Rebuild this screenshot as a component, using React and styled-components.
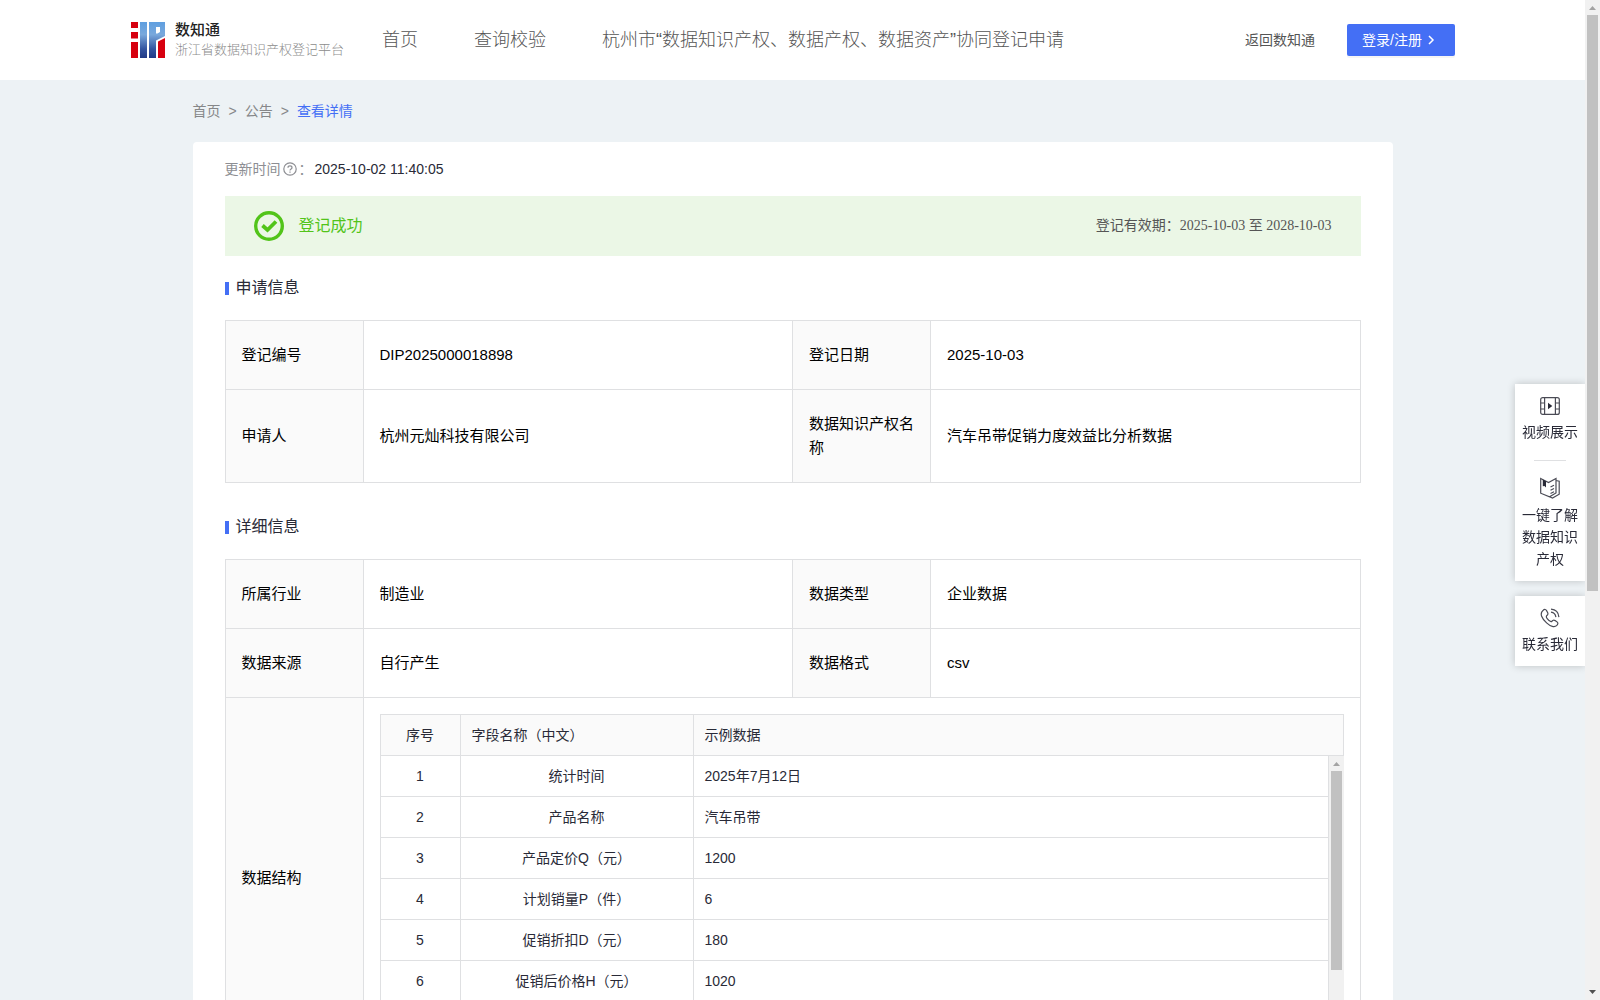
import React from 'react';
import styled, { createGlobalStyle } from 'styled-components';

const GlobalStyle = createGlobalStyle`
	* {
		box-sizing: border-box;
	}

	body {
		margin: 0;
		color: #292a37;
		background: #edf2f5;
		font-family: "Liberation Sans", "Noto Sans CJK SC", sans-serif;
		font-size: 14px;
		line-height: 22px;
	}

	a {
		color: inherit;
		text-decoration: none;
	}
`;

const SShell = styled.div`
	display: flex;
	height: 100vh;
	overflow: hidden;
`;

const SPage = styled.div`
	flex: 1;
	min-width: 0;
	overflow-y: auto;
	scrollbar-width: none;
`;

/* scrollbars */

const STrack = styled.div`
	display: flex;
	flex: none;
	flex-direction: column;
	align-items: center;
	width: 15px;
	background: #f1f1f1;
`;

const SThumb = styled.div`
	width: 11px;
	height: ${({ $size }) => $size};
	margin-bottom: auto;
	background: #c1c1c1;
`;

const SArrow = styled.svg`
	flex: none;
	width: 15px;
	height: 15px;
	fill: ${({ $dark }) => ($dark ? '#505050' : '#a3a3a3')};
`;

const Scrollbar = ({ size }) => (
	<STrack aria-hidden="true">
		<SArrow viewBox="0 0 15 15">
			<path d="M4 10 7.5 6 11 10z" />
		</SArrow>
		<SThumb $size={size} />
		<SArrow viewBox="0 0 15 15" $dark>
			<path d="M4 5 7.5 9 11 5z" />
		</SArrow>
	</STrack>
);

/* header */

const SHeader = styled.header`
	display: flex;
	align-items: center;
	height: 80px;
	padding: 0 130px;
	background: #fff;
	color: #555;
`;

const SBrand = styled.a`
	display: flex;
	align-items: center;
	width: 252px;
	padding-left: 1px;
	gap: 10px;
	white-space: nowrap;

	svg {
		flex: none;
	}
`;

const SBrandName = styled.div`
	color: #222;
	font-size: 15px;
	font-weight: 500;
	line-height: 20px;
`;

const SBrandSub = styled.div`
	color: #8c8c8c;
	font-size: 13px;
	font-weight: 300;
	line-height: 20px;
`;

const SNav = styled.nav`
	display: flex;
	flex: 1;
	gap: 56px;
	font-size: 18px;
	font-weight: 300;
	white-space: nowrap;
`;

const SActions = styled.div`
	display: flex;
	align-items: center;
	gap: 32px;
	white-space: nowrap;
`;

const SLogin = styled.button`
	display: flex;
	align-items: center;
	gap: 2px;
	width: 108px;
	height: 32px;
	padding: 0 15px;
	border: 0;
	border-radius: 2px;
	background: #446ff5;
	box-shadow: 0 2px 0 rgba(0, 0, 0, 0.04);
	color: #fff;
	font: inherit;
	white-space: nowrap;
	cursor: pointer;
`;

/* content */

const SMain = styled.main`
	max-width: 1200px;
	margin: 0 auto;
`;

const SCrumbs = styled.nav`
	display: flex;
	gap: 8px;
	padding: 20px 0;
	color: #868789;

	a:last-child {
		color: #446ff5;
	}
`;

const SCard = styled.section`
	padding: 16px 32px 32px;
	border-radius: 4px;
	background: #fff;
`;

const SUpdated = styled.div`
	display: flex;
	align-items: center;
	gap: 2px;
	color: #8d8e93;

	time {
		color: #292a37;
	}
`;

const SBanner = styled.div`
	display: flex;
	align-items: center;
	gap: 15px;
	height: 60px;
	margin-top: 16px;
	padding: 0 29px;
	background: #ebf7e6;
	color: #52c41a;
	font-size: 16px;
`;

const SValidity = styled.span`
	margin-left: auto;
	color: #555;
	font-family: "Liberation Serif", "Noto Sans CJK SC", serif;
	font-size: 14px;
`;

const STitle = styled.h2`
	display: flex;
	align-items: center;
	gap: 7px;
	height: 64px;
	margin: 0;
	font-size: 16px;
	font-weight: 400;

	&::before {
		width: 4px;
		height: 13px;
		background: #446ff5;
		content: '';
	}
`;

const SInfoTable = styled.table`
	width: 100%;
	margin-bottom: 12px;
	border-collapse: collapse;
	table-layout: fixed;
	color: #000;
	font-size: 15px;
	line-height: 24px;

	> colgroup > col:nth-child(odd) {
		width: 138px;
	}
`;

const SLabel = styled.th`
	padding: 22px 16px;
	border: 1px solid #dfe0e2;
	background: #fafafa;
	font-weight: 400;
	text-align: left;
`;

const SValue = styled.td`
	padding: ${({ $nested }) => ($nested ? '16px' : '22px 16px')};
	border: 1px solid #dfe0e2;
`;

const SFieldTable = styled.table`
	width: 100%;
	border-collapse: separate;
	border-spacing: 0;
	border-left: 1px solid #dfe0e2;
	table-layout: fixed;
	color: #292a37;
	font-size: 14px;
	line-height: 22px;

	th,
	td {
		height: 41px;
		padding: 9px 11px;
		border-right: 1px solid #dfe0e2;
		border-bottom: 1px solid #dfe0e2;
		text-align: left;
	}

	th {
		height: 42px;
		border-top: 1px solid #dfe0e2;
		background: #fafafa;
		font-weight: 400;
	}

	th:first-child,
	td:first-child,
	td:nth-child(2) {
		text-align: center;
	}

	col:nth-child(1) {
		width: 80px;
	}

	col:nth-child(2) {
		width: 233px;
	}
`;

const SFieldBody = styled.div`
	display: flex;
	height: 286px;
	overflow: hidden;
`;

const SFieldScroll = styled.div`
	flex: 1;
	overflow-y: auto;
	scrollbar-width: none;
`;

/* floating shortcuts */

const SSide = styled.aside`
	position: fixed;
	top: 384px;
	right: 15px;
	display: flex;
	flex-direction: column;
	gap: 15px;
	width: 70px;
`;

const SSideBox = styled.div`
	display: flex;
	flex-direction: column;
	align-items: center;
	padding: 12px 6px 11px;
	background: #fff;
	box-shadow: 0 0 8px rgba(0, 0, 0, 0.2);
	clip-path: inset(-10px 0 -10px -10px);

	hr {
		width: 32px;
		margin: 17px 0 16px;
		border: 0;
		border-top: 1px solid #dfe0e2;
	}
`;

const SSideLink = styled.a`
	display: flex;
	flex-direction: column;
	align-items: center;
	gap: 5px;
	width: 58px;
	text-align: center;
`;

const Logo = () => (
	<svg width="34" height="36" viewBox="0 0 34 36">
		<defs>
			<linearGradient id="blue" gradientUnits="userSpaceOnUse" x1="0" y1="0" x2="0" y2="36">
				<stop offset="0" stopColor="#5f9fe0" />
				<stop offset="0.35" stopColor="#79a8dc" />
				<stop offset="0.75" stopColor="#3354a0" />
				<stop offset="1" stopColor="#213a86" />
			</linearGradient>
		</defs>
		<path fill="#d7000f" d="M0 0h7v6H0zM0 10h7v6.500H0zM0 20h7v16H0zM27 19.500 34 16v20h-7z" />
		<path fill="url(#blue)" d="M9 0h7v36H9z" />
		<path fill="url(#blue)" fillRule="evenodd" d="M18 0h16v14l-9 4.500V36h-7zM25 5v6.500h1.500L29 10V5z" />
	</svg>
);

const Chevron = () => (
	<svg width="14" height="14" viewBox="0 0 14 14" fill="none" stroke="#fff" strokeWidth="1.500">
		<path d="M5 3l4 4-4 4" />
	</svg>
);

const Question = () => (
	<svg width="14" height="14" viewBox="0 0 14 14" fill="none" stroke="#8d8e93" strokeWidth="1.200">
		<circle cx="7" cy="7" r="6.200" />
		<path d="M5 5.700C5 3.300 9 3.300 9 5.700 9 7 7 7 7 8.600M7 9.400v1.300" />
	</svg>
);

const Success = () => (
	<svg width="30" height="30" viewBox="0 0 30 30" fill="none" stroke="#52c41a">
		<circle cx="15" cy="15" r="13.300" strokeWidth="3.400" />
		<path d="M8.500 14.500 13.500 19 22 10.500" strokeWidth="3.800" />
	</svg>
);

const Video = () => (
	<svg width="20" height="20" viewBox="0 0 20 20" fill="none" stroke="#4a4b55" strokeWidth="1.200">
		<rect x="0.700" y="1.600" width="18.600" height="16.800" rx="2" />
		<path d="M4.600 1.600v16.800M15.400 1.600v16.800M.7 7h3.900M.7 13h3.900M15.400 7h3.900M15.400 13h3.900" />
		<path d="M8 6.800 12.300 10 8 13.200z" fill="#292a37" stroke="none" />
	</svg>
);

const Book = () => (
	<svg width="20" height="22" viewBox="0 0 20 22" fill="none" stroke="#4a4b55" strokeWidth="1.200">
		<path d="M.7 1.500 8.500 5.500 16 1.500V16l-6.500 3.800L.7 16.200zM16 3.500l3.200.7v13L12.500 21l-3-1.200" />
		<path d="M10.500 10 14 8.200M10.500 13.300 14 11.500M10.500 16.500 14 14.700" />
		<path d="M2.800 2.600 6 4.200v6.300L4.500 9l-1.700.2z" fill="#292a37" stroke="none" />
	</svg>
);

const Phone = () => (
	<svg width="20" height="20" viewBox="0 0 20 20" fill="none" stroke="#4a4b55" strokeWidth="1.200">
		<path d="M3.200 2.200C4.600.9 5.900 1.400 6.700 2.900l1 1.900c.6 1.200.1 1.900-.8 2.700-1 .9-.8 1.700.3 3.200 1.300 1.700 2.500 2.900 3.800 3 .9 0 1.300-1.200 2.300-1.500 1-.3 3.200 1.200 4 1.900 1 .9.5 2.400-.7 3.500-2 1.900-6.100 1-10-2.700C2 10.700-.9 5.700 3.200 2.200z" />
		<path d="M11 4.200c2.800.4 4.500 2 4.900 4.900M11 1.200c4.500.3 7.500 3 7.900 7.900" />
	</svg>
);

const fields = [
	['统计时间', '2025年7月12日'],
	['产品名称', '汽车吊带'],
	['产品定价Q（元）', '1200'],
	['计划销量P（件）', '6'],
	['促销折扣D（元）', '180'],
	['促销后价格H（元）', '1020'],
];

const InfoTable = ({ rows, children }) => (
	<SInfoTable>
		<colgroup>
			<col />
			<col />
			<col />
			<col />
		</colgroup>
		<tbody>
			{rows.map(([label, value, label2, value2]) => (
				<tr key={label}>
					<SLabel scope="row">{label}</SLabel>
					<SValue>{value}</SValue>
					<SLabel scope="row">{label2}</SLabel>
					<SValue>{value2}</SValue>
				</tr>
			))}
			{children}
		</tbody>
	</SInfoTable>
);

const FieldCols = () => (
	<colgroup>
		<col />
		<col />
		<col />
	</colgroup>
);

const Header = () => (
	<SHeader>
		<SBrand href="#home">
			<Logo />
			<div>
				<SBrandName>数知通</SBrandName>
				<SBrandSub>浙江省数据知识产权登记平台</SBrandSub>
			</div>
		</SBrand>
		<SNav>
			<a href="#home">首页</a>
			<a href="#query">查询校验</a>
			<a href="#apply">杭州市“数据知识产权、数据产权、数据资产”协同登记申请</a>
		</SNav>
		<SActions>
			<a href="#back">返回数知通</a>
			<SLogin type="button">
				登录/注册
				<Chevron />
			</SLogin>
		</SActions>
	</SHeader>
);

const Side = () => (
	<SSide>
		<SSideBox>
			<SSideLink href="#video">
				<Video />
				视频展示
			</SSideLink>
			<hr />
			<SSideLink href="#guide">
				<Book />
				一键了解数据知识产权
			</SSideLink>
		</SSideBox>
		<SSideBox>
			<SSideLink href="#contact">
				<Phone />
				联系我们
			</SSideLink>
		</SSideBox>
	</SSide>
);

const App = () => {
	return (
		<SShell>
			<GlobalStyle />
			<SPage>
				<Header />
				<SMain>
					<SCrumbs>
						<a href="#home">首页</a>
						<span>&gt;</span>
						<a href="#notice">公告</a>
						<span>&gt;</span>
						<a href="#detail">查看详情</a>
					</SCrumbs>
					<SCard>
						<SUpdated>
							更新时间
							<Question />
							<span>：</span>
							<time>2025-10-02 11:40:05</time>
						</SUpdated>
						<SBanner>
							<Success />
							登记成功
							<SValidity>登记有效期：2025-10-03 至 2028-10-03</SValidity>
						</SBanner>
						<STitle>申请信息</STitle>
						<InfoTable
							rows={[
								['登记编号', 'DIP2025000018898', '登记日期', '2025-10-03'],
								['申请人', '杭州元灿科技有限公司', '数据知识产权名称', '汽车吊带促销力度效益比分析数据'],
							]}
						/>
						<STitle>详细信息</STitle>
						<InfoTable
							rows={[
								['所属行业', '制造业', '数据类型', '企业数据'],
								['数据来源', '自行产生', '数据格式', 'csv'],
							]}
						>
							<tr>
								<SLabel scope="row">数据结构</SLabel>
								<SValue colSpan={3} $nested>
									<SFieldTable>
										<FieldCols />
										<thead>
											<tr>
												<th>序号</th>
												<th>字段名称（中文）</th>
												<th>示例数据</th>
											</tr>
										</thead>
									</SFieldTable>
									<SFieldBody>
										<SFieldScroll>
											<SFieldTable>
												<FieldCols />
												<tbody>
													{fields.map(([name, sample], i) => (
														<tr key={name}>
															<td>{i + 1}</td>
															<td>{name}</td>
															<td>{sample}</td>
														</tr>
													))}
												</tbody>
											</SFieldTable>
										</SFieldScroll>
										<Scrollbar size="199px" />
									</SFieldBody>
								</SValue>
							</tr>
						</InfoTable>
					</SCard>
				</SMain>
			</SPage>
			<Scrollbar size="576px" />
			<Side />
		</SShell>
	);
};

export default App;
